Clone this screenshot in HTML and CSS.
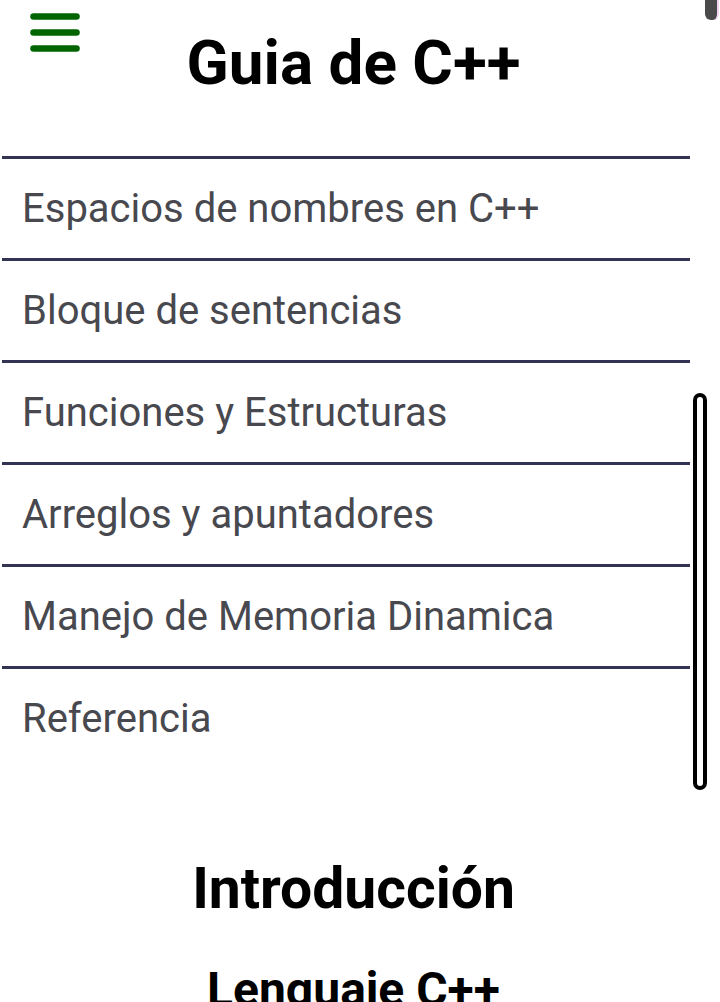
FILE: index.html
```html
<!DOCTYPE html>
<html lang="es">
<head>
<meta charset="utf-8">
<title>Guia de C++</title>
<link rel="stylesheet" href="styles.css">
</head>
<body>
<div class="page">
  <header class="header">
    <button class="menu-btn" aria-label="Menú">
      <svg width="50" height="39" viewBox="0 0 50 39">
        <g stroke="#006400" stroke-width="6.5" stroke-linecap="round">
          <line x1="3.5" y1="3.5" x2="46.5" y2="3.5"/>
          <line x1="3.5" y1="19.5" x2="46.5" y2="19.5"/>
          <line x1="3.5" y1="35.5" x2="46.5" y2="35.5"/>
        </g>
      </svg>
    </button>
    <h1 class="title">Guia de C++</h1>
    <div></div>
  </header>
  <nav class="nav">
    <a class="nav-item" href="#">Espacios de nombres en C++</a>
    <a class="nav-item" href="#">Bloque de sentencias</a>
    <a class="nav-item" href="#">Funciones y Estructuras</a>
    <a class="nav-item" href="#">Arreglos y apuntadores</a>
    <a class="nav-item" href="#">Manejo de Memoria Dinamica</a>
    <a class="nav-item" href="#">Referencia</a>
  </nav>
  <main class="content">
    <h2 class="section-title">Introducción</h2>
    <h3 class="sub-title">Lenguaje C++</h3>
  </main>
</div>
<div class="nav-scroll-thumb"></div>
<div class="page-scroll-thumb"></div>
</body>
</html>
```

FILE: styles.css
```css
html, body {
  margin: 0;
  padding: 0;
  background: #ffffff;
}
body {
  width: 720px;
  height: 1002px;
  overflow: hidden;
  position: relative;
  font-family: Roboto, "Liberation Sans", sans-serif;
}
.page {
  width: 707px;
}
.header {
  height: 156px;
  display: grid;
  grid-template-columns: 1fr auto 1fr;
  align-items: start;
}
.menu-btn {
  margin: 13px 0 0 30px;
  padding: 0;
  border: 0;
  background: transparent;
  width: 50px;
  height: 39px;
  justify-self: start;
  display: block;
}
.menu-btn svg {
  display: block;
}
.title {
  margin: 27px 0 0 0;
  font-size: 62px;
  line-height: 72px;
  font-weight: 700;
  color: #000;
  white-space: nowrap;
}
.nav {
  margin-left: 2px;
  width: 688px;
  display: flex;
  flex-direction: column;
}
.nav-item {
  border-top: 3px solid #333353;
  height: 99px;
  display: flex;
  align-items: center;
  padding-left: 20px;
  font-size: 40px;
  color: #48484f;
  text-decoration: none;
  white-space: nowrap;
}
.content {
  display: flex;
  flex-direction: column;
  align-items: center;
  padding-top: 87px;
}
.section-title {
  margin: 0;
  font-size: 57px;
  line-height: 68px;
  font-weight: 700;
  color: #000;
  white-space: nowrap;
}
.sub-title {
  margin: 39px 0 0 0;
  font-size: 48px;
  line-height: 56px;
  font-weight: 700;
  color: #000;
  white-space: nowrap;
}
.nav-scroll-thumb {
  position: absolute;
  left: 693px;
  top: 393px;
  width: 6px;
  height: 389px;
  border: 4px solid #000;
  border-radius: 7px;
  background: #fff;
}
.page-scroll-thumb {
  position: absolute;
  left: 705px;
  top: -8px;
  width: 12px;
  height: 28px;
  background: #4a4a4a;
  border-radius: 6px;
  border-right: 2px solid #f0d4f2;
}
```
